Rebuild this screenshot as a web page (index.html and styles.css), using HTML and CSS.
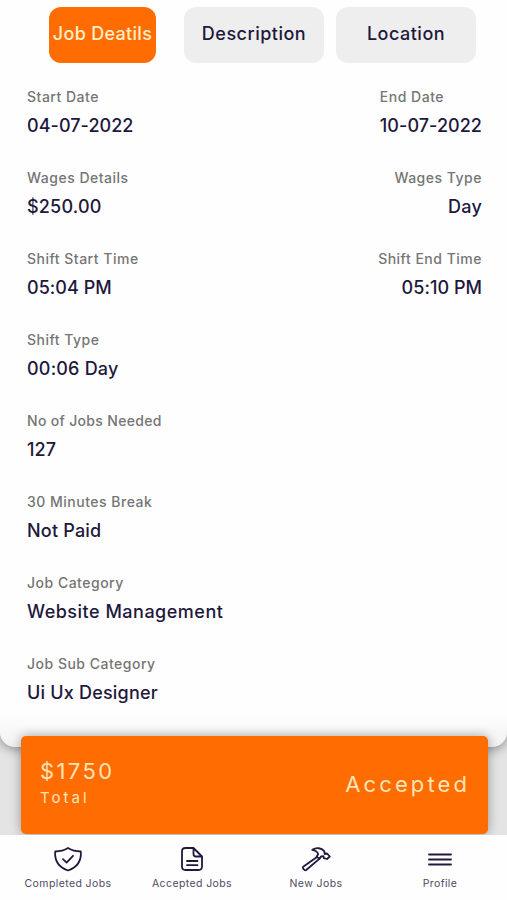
FILE: index.html
```html
<!DOCTYPE html>
<html lang="en">
	<head>
		<meta charset="UTF-8" />
		<meta name="viewport" content="width=device-width, initial-scale=1.0" />
		<title>Job Details</title>
		<link rel="stylesheet" href="styles.css">
	</head>
	<body>
		<main class="details-card">
			<div class="tabs">
				<button class="tab tab-active">Job Deatils</button>
				<button class="tab">Description</button>
				<button class="tab">Location</button>
			</div>
			<section class="details">
				<div class="row">
					<div class="field">
						<div class="label">Start Date</div>
						<div class="value value-number">04-07-2022</div>
					</div>
					<div class="field">
						<div class="label">End Date</div>
						<div class="value value-number">10-07-2022</div>
					</div>
				</div>
				<div class="row">
					<div class="field">
						<div class="label">Wages Details</div>
						<div class="value">$250.00</div>
					</div>
					<div class="field field-right">
						<div class="label">Wages Type</div>
						<div class="value">Day</div>
					</div>
				</div>
				<div class="row">
					<div class="field">
						<div class="label">Shift Start Time</div>
						<div class="value value-number">05:04 PM</div>
					</div>
					<div class="field field-right">
						<div class="label">Shift End Time</div>
						<div class="value value-number">05:10 PM</div>
					</div>
				</div>
				<div class="row">
					<div class="field">
						<div class="label">Shift Type</div>
						<div class="value">00:06 Day</div>
					</div>
				</div>
				<div class="row">
					<div class="field">
						<div class="label label-long">No of Jobs Needed</div>
						<div class="value value-number">127</div>
					</div>
				</div>
				<div class="row">
					<div class="field">
						<div class="label">30 Minutes Break</div>
						<div class="value">Not Paid</div>
					</div>
				</div>
				<div class="row">
					<div class="field">
						<div class="label">Job Category</div>
						<div class="value value-wide">Website Management</div>
					</div>
				</div>
				<div class="row">
					<div class="field">
						<div class="label">Job Sub Category</div>
						<div class="value">Ui Ux Designer</div>
					</div>
				</div>
			</section>
		</main>

		<section class="total-bar">
			<div>
				<div class="amount">$1750</div>
				<div class="total-label">Total</div>
			</div>
			<div class="status">Accepted</div>
		</section>

		<nav class="bottom-nav">
			<a class="nav-item">
				<svg class="nav-icon" viewBox="0 0 30 26">
					<path d="M15 2C11.5 4.2 7 5.4 2.2 5.5C1.4 14.5 5.8 21.2 15 24.5C24.2 21.2 28.6 14.5 27.8 5.5C23 5.4 18.5 4.2 15 2Z" />
					<path d="M10 13.2L13.6 16.6L20 9.8" />
				</svg>
				Completed Jobs
			</a>
			<a class="nav-item">
				<svg class="nav-icon" viewBox="0 0 30 26">
					<path d="M16.5 2H8.5Q5 2 5 5.5V20.5Q5 24 8.5 24H21.5Q25 24 25 20.5V10.5L16.5 2V8Q16.5 10.500 19 10.500H25" />
					<path d="M10 15H20.5M10 19.2H20.5" />
				</svg>
				Accepted Jobs
			</a>
			<a class="nav-item">
				<svg class="nav-icon" viewBox="0 0 30 26">
					<path d="M16 10.900L2.200 20.700Q1.300 21.700 2.400 22.900L3.400 24Q4.500 24.700 5.500 23.800L18.300 12.900" />
					<path d="M11.3 3.8C15.5 1 20.5 2 23.2 5.2L23.7 8L26 7.500L28.800 10.500L26 13L22.800 12.200L22.500 10.200L20.200 10.400L18.300 12.900L15.700 10.600L17.200 8.300C16.500 5.500 14.500 4.200 11.300 3.800Z" />
				</svg>
				New Jobs
			</a>
			<a class="nav-item">
				<svg class="nav-icon" viewBox="0 0 30 26">
					<path d="M4 8.5H26M4 13.5H26M4 18.5H26" />
				</svg>
				Profile
			</a>
		</nav>
	</body>
</html>
```
FILE: styles.css
```css
* {
	box-sizing: border-box;
}

body {
	margin: 0;
	height: 900px;
	overflow: hidden;
	background-color: #e4e4e4;
	font-family: Inter, "Liberation Sans", sans-serif;
	color: #21183c;
}

.details-card {
	height: 747px;
	padding-top: 7px;
	background: linear-gradient(to bottom, #fefefe 715px, #f1f1f1 747px);
	border-radius: 0 0 15px 15px;
	box-shadow: 0 2px 12px rgba(0, 0, 0, 0.4);
}

.tabs {
	display: flex;
	padding-left: 49px;
}

.tab {
	width: 140px;
	height: 56px;
	margin-right: 12px;
	padding: 0 0 4px;
	border: none;
	border-radius: 12px;
	background-color: #eeeeee;
	color: #21183c;
	font-family: inherit;
	font-size: 18px;
	font-weight: 500;
	letter-spacing: 0.5px;
	white-space: nowrap;
}

.tab-active {
	width: 107px;
	margin-right: 28px;
	background-color: #ff6c02;
	color: #ffedc8;
	letter-spacing: 0.3px;
}

.details {
	padding: 24px 25px 0 27px;
}

.row {
	display: flex;
	justify-content: space-between;
	height: 81px;
}

.field-right {
	text-align: right;
}

.label {
	margin-bottom: 6px;
	font-size: 14px;
	font-weight: 500;
	line-height: 20px;
	letter-spacing: 0.5px;
	color: #757575;
}

.label-long {
	letter-spacing: 0.32px;
}

.value {
	font-size: 18px;
	font-weight: 500;
	line-height: 25px;
	letter-spacing: 0.2px;
}

.value-number {
	letter-spacing: 0.05px;
}

.value-wide {
	letter-spacing: 0.5px;
}

.total-bar {
	position: relative;
	display: flex;
	justify-content: space-between;
	align-items: center;
	width: 467px;
	height: 98px;
	margin: -11px 0 0 21px;
	padding: 0 18px 2px 19px;
	border-radius: 5px;
	background-color: #ff6c02;
	box-shadow: 0 0 11px rgba(0, 0, 0, 0.35);
	color: #ffe4b8;
}

.amount {
	font-size: 22px;
	line-height: 28px;
	letter-spacing: 2.4px;
}

.total-label {
	font-size: 15px;
	line-height: 26px;
	letter-spacing: 3px;
}

.status {
	font-size: 22px;
	letter-spacing: 3.1px;
}

.bottom-nav {
	position: relative;
	display: flex;
	height: 66px;
	margin-top: 1px;
	padding: 11px 5px 0 6px;
	background-color: #fefefe;
}

.nav-item {
	display: flex;
	flex-direction: column;
	align-items: center;
	width: 124px;
	font-size: 10.5px;
	line-height: 14px;
	letter-spacing: 0.4px;
	color: #51495f;
}

.nav-icon {
	width: 30px;
	height: 26px;
	margin-bottom: 5px;
	fill: none;
	stroke: #21183c;
	stroke-width: 1.8;
	stroke-linecap: round;
	stroke-linejoin: round;
}
```
